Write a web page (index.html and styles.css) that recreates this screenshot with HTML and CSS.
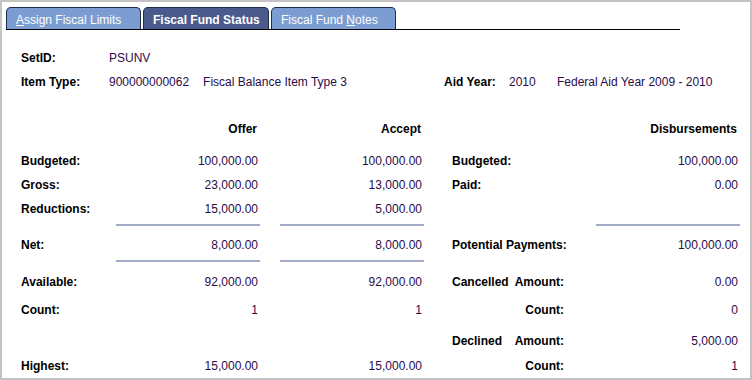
FILE: index.html
```html
<!DOCTYPE html>
<html lang="en">
<head>
    <meta charset="UTF-8">
    <title>Fiscal Fund Status</title>
    <link rel="stylesheet" href="styles.css">
</head>
<body>
    <div class="frame">
        <div class="tabs">
            <div class="tab tab-1"><span class="key">A</span>ssign Fiscal Limits</div>
            <div class="tab tab-2 active">Fiscal Fund Status</div>
            <div class="tab tab-3">Fiscal Fund <span class="key">N</span>otes</div>
        </div>

        <div class="info">
            <div class="lbl">SetID:</div>
            <div class="val">PSUNV</div>
            <div></div><div></div><div></div>

            <div class="lbl">Item Type:</div>
            <div class="val">900000000062<span class="descr">Fiscal Balance Item Type 3</span></div>
            <div class="lbl">Aid Year:</div>
            <div class="val">2010</div>
            <div class="val">Federal Aid Year 2009 - 2010</div>
        </div>

        <div class="totals">
            <div class="off head">Offer</div>
            <div class="acc head">Accept</div>
            <div class="dis head">Disbursements</div>

            <div class="lab">Budgeted:</div>
            <div class="off num">100,000.00</div>
            <div class="acc num">100,000.00</div>
            <div class="rlab">Budgeted:</div>
            <div class="dis num">100,000.00</div>

            <div class="lab">Gross:</div>
            <div class="off num">23,000.00</div>
            <div class="acc num">13,000.00</div>
            <div class="rlab">Paid:</div>
            <div class="dis num">0.00</div>

            <div class="lab">Reductions:</div>
            <div class="off num">15,000.00</div>
            <div class="acc num">5,000.00</div>

            <div class="off rule"></div>
            <div class="acc rule"></div>
            <div class="dis rule"></div>

            <div class="lab">Net:</div>
            <div class="off num">8,000.00</div>
            <div class="acc num">8,000.00</div>
            <div class="rlab">Potential Payments:</div>
            <div class="dis num">100,000.00</div>

            <div class="off rule"></div>
            <div class="acc rule"></div>

            <div class="lab">Available:</div>
            <div class="off num">92,000.00</div>
            <div class="acc num">92,000.00</div>
            <div class="rlab split"><span>Cancelled</span><span>Amount:</span></div>
            <div class="dis num">0.00</div>

            <div class="lab">Count:</div>
            <div class="off num">1</div>
            <div class="acc num">1</div>
            <div class="rlab split end"><span>Count:</span></div>
            <div class="dis num">0</div>

            <div class="rlab split"><span>Declined</span><span>Amount:</span></div>
            <div class="dis num">5,000.00</div>

            <div class="lab">Highest:</div>
            <div class="off num">15,000.00</div>
            <div class="acc num">15,000.00</div>
            <div class="rlab split end"><span>Count:</span></div>
            <div class="dis num">1</div>
        </div>
    </div>
</body>
</html>
```

FILE: styles.css
```css
* {
    margin: 0;
    padding: 0;
    box-sizing: border-box;
}

body {
    font-family: 'Liberation Sans', Arial, sans-serif;
    font-size: 12px;
    color: #000;
    background: #fff;
}

.frame {
    width: 752px;
    height: 380px;
    border: 2px solid #c3c3c3;
    overflow: hidden;
}

/* tab strip */
.tabs {
    display: flex;
    width: 674px;
    margin: 5px 0 0 4px;
    border-bottom: 1px solid #000;
}

.tab {
    height: 22px;
    margin-right: 2px;
    padding: 2px 0 0 9px;
    line-height: 20px;
    color: #fff;
    background: #7c9dd1;
    border: 1px solid #1d2b4c;
    border-bottom: none;
    border-radius: 5px 5px 0 0;
    white-space: nowrap;
}

.tab.active {
    background: #4b5a8d;
    font-weight: bold;
}

.tab-1 { width: 135px; }
.tab-2 { width: 126px; }
.tab-3 { width: 125px; }

.key {
    text-decoration: underline;
}

/* setid / item type */
.info {
    display: grid;
    grid-template-columns: 88px 335px 65px 48px auto;
    grid-auto-rows: 24px;
    align-items: center;
    margin: 16px 0 0 19px;
}

.lbl {
    font-weight: bold;
}

.val {
    color: #2a0b4a;
    white-space: nowrap;
}

.descr {
    margin-left: 14px;
}

/* totals grid */
.totals {
    display: grid;
    grid-template-columns: 95px 144px 20px 144px 28px 144px 144px;
    grid-template-rows: 32px 24px 24px 24px 12px 24px 13px 24px 32px 30px 20px;
    align-items: center;
    margin: 23px 0 0 19px;
}

.lab { grid-column: 1; font-weight: bold; }
.off { grid-column: 2; }
.acc { grid-column: 4; }
.rlab { grid-column: 6; font-weight: bold; white-space: nowrap; }
.dis { grid-column: 7; }

.head {
    align-self: start;
    line-height: 24px;
    text-align: right;
    padding-right: 3px;
    font-weight: bold;
}

.num {
    text-align: right;
    padding-right: 2px;
    color: #2a0b4a;
}

.rule {
    align-self: start;
    height: 2px;
    margin-top: 3px;
    background: #a2abc6;
}

.split {
    display: flex;
    justify-content: space-between;
    width: 112px;
}

.split.end {
    justify-content: flex-end;
}
```
